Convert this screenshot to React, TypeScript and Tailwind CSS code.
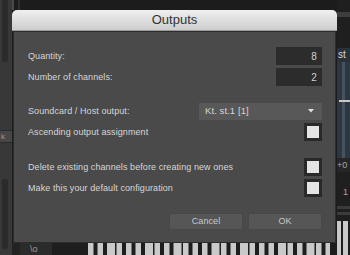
import React from 'react';

function Piano({ width }: { width: number }) {
  // simplified keyboard strip seen under the dialog
  const keys: React.ReactNode[] = [];
  const pattern = [1, 1, 0, 1, 1, 1, 0];
  let x = 0;
  let i = 0;
  while (x < width) {
    keys.push(<rect key={'w' + i} x={x} y={0} width={8} height={12} fill="#c9c9c9" />);
    if (pattern[i % 7]) {
      keys.push(<rect key={'b' + i} x={x + 5.5} y={0} width={4.5} height={12} fill="#1d1d1d" />);
    }
    x += 9.5;
    i++;
  }
  return (
    <svg width={width} height={12} className="block">
      <rect width={width} height={12} fill="#1d1d1d" />
      {keys}
    </svg>
  );
}

function NumBox({ value }: { value: string }) {
  return (
    <div className="w-[46px] h-[18px] bg-[#2c2c2c] flex items-center justify-end pr-[5px] text-[10px] text-[#cfcfcf]">
      {value}
    </div>
  );
}

function Check() {
  return (
    <div className="w-[18px] h-[18px] bg-[#292929] p-[3px]">
      <div className="w-full h-full bg-[#e4e4e4]" />
    </div>
  );
}

function Row({ label, children, className }: { label: string; children: React.ReactNode; className?: string }) {
  return (
    <div className={'flex items-center justify-between h-[18px] ' + (className || '')}>
      <span className="pt-[2px]">{label}</span>
      {children}
    </div>
  );
}

export default function App() {
  return (
    <div className="relative w-[350px] h-[255px] overflow-hidden bg-[#1c1c1c] font-['Liberation_Sans',Arial,sans-serif]">
      {/* background: instrument UI behind the dialog */}
      <div className="flex h-full">
        <div className="w-[12px] h-full bg-[#383838] flex flex-col">
          <div className="ml-[2px] w-[6px] h-[62px] bg-[#2b2b2b] rounded-b-[2px]" />
          <div className="mt-[68px] h-[13px] bg-[#474747] border-y border-[#2a2a2a] text-[8px] text-[#9a9a9a] leading-[11px] pl-[1px]">k</div>
          <div className="mt-[36px] ml-[2px] w-[6px] h-[70px] bg-[#2b2b2b] rounded-[2px]" />
        </div>
        <div className="flex-1 flex flex-col">
          <div className="flex h-[10px]">
            <div className="w-[2px] bg-[#4a4a4a]" />
            <div className="w-[4px]" />
            <div className="w-[2px] bg-[#2f2f2f]" />
          </div>
          <div className="flex-1" />
          <div className="flex h-[12px]">
            <div className="w-[8px] bg-[#232323]" />
            <div className="w-[32px] bg-[#2b2b2b] text-[9px] leading-[12px] text-[#9c9c9c] pl-[10px]">\o</div>
            <div className="w-[36px] bg-[#1e1e1e]" />
            <Piano width={242} />
          </div>
        </div>
        <div className="w-[13px] h-full flex flex-col bg-[#1f1f1f]">
          <div className="h-[12px]" />
          <div className="h-[5px] bg-[#3d3d3d]" />
          <div className="h-[31px]" />
          <div className="h-[14px] bg-[#2b3139] text-[10px] leading-[14px] text-[#d0d6dc] pl-[1px]">st</div>
          <div className="h-[96px] bg-[#2c3743] relative flex justify-center">
            <div className="w-[3px] h-full bg-[#48525d]" />
            <div className="absolute top-[38px] left-[2px] w-[11px] h-[2px] bg-[#c8c8c8]" />
          </div>
          <div className="h-[14px] text-[9px] leading-[14px] text-[#a8a8a8] bg-[#262626]">+0</div>
          <div className="h-[14px]" />
          <div className="h-[12px] text-[9px] leading-[12px] text-[#a8a8a8] pl-[6px]">1</div>
          <div className="h-[8px]" />
          <div className="h-[3px] bg-[#3b3b3b]" />
          <div className="h-[3px]" />
          <div className="h-[3px] bg-[#3b3b3b]" />
          <div className="h-[6px]" />
          <div className="flex-1 flex gap-[2px] bg-[#1d1d1d]">
            <div className="w-[4px] bg-[#c9c9c9]" />
            <div className="w-[5px] bg-[#c9c9c9]" />
          </div>
        </div>
      </div>

      {/* dialog */}
      <div className="absolute left-[12px] top-[10px] w-[325px]">
        <div className="h-[21px] rounded-t-[5px] bg-gradient-to-b from-[#f0f0f0] to-[#cdcdcd] border-b border-[#9a9a9a] flex items-center justify-center text-[13px] text-[#333333]">
          Outputs
        </div>
        <div className="mx-[1px] h-[212px] bg-[#4a4a4a] border border-[#2d2d2d] pt-[15px] pl-[14px] pr-[13px] text-[9px] tracking-[0.08px] text-[#d6d6d6]">
          <Row label="Quantity:">
            <NumBox value="8" />
          </Row>
          <Row label="Number of channels:" className="mt-[3px]">
            <NumBox value="2" />
          </Row>
          <Row label="Soundcard / Host output:" className="mt-[16px]">
            <div className="w-[123px] h-[17px] bg-[#585858] flex items-center justify-between pl-[6px] pr-[8px] text-[9.5px] text-[#d6d6d6]">
              <span>Kt. st.1 [1]</span>
              <svg width="6" height="4" viewBox="0 0 6 4">
                <path d="M0 0 H6 L3 3.5 Z" fill="#e0e0e0" />
              </svg>
            </div>
          </Row>
          <Row label="Ascending output assignment" className="mt-[3px]">
            <Check />
          </Row>
          <Row label="Delete existing channels before creating new ones" className="mt-[17px]">
            <Check />
          </Row>
          <Row label="Make this your default configuration" className="mt-[3px]">
            <Check />
          </Row>
          <div className="flex justify-end gap-[5px] mt-[16px]">
            <button className="w-[74px] h-[17px] bg-[#565656] border border-[#474747] text-[9px] text-[#c8c8c8]">Cancel</button>
            <button className="w-[74px] h-[17px] bg-[#565656] border border-[#474747] text-[9px] text-[#c8c8c8]">OK</button>
          </div>
        </div>
      </div>
    </div>
  );
}
